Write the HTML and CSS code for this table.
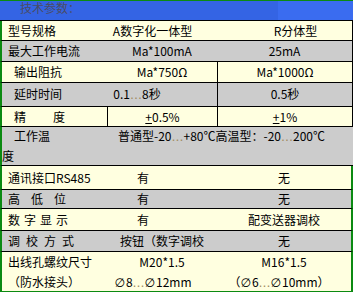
FILE: index.html
```html
<!DOCTYPE html>
<html lang="zh-CN">
<head>
<meta charset="utf-8">
<title>技术参数</title>
<link rel="stylesheet" href="styles.css">
</head>
<body>
<div class="spec">
  <div class="head"><span class="title">技术参数：</span></div>

  <div class="row cream edge h19">
    <div class="lbl">型号规格</div>
    <div class="mid shift-a">A数字化一体型</div>
    <div class="rgt shift-r">R分体型</div>
  </div>

  <div class="row gray edge h20">
    <div class="lbl">最大工作电流</div>
    <div class="mid">Ma*100mA</div>
    <div class="rgt">25mA</div>
  </div>

  <div class="row cream edge h20">
    <div class="lbl ind">输出阻抗</div>
    <div class="mid">Ma*750Ω</div>
    <div class="rgt vl">Ma*1000Ω</div>
  </div>

  <div class="row gray edge h21">
    <div class="lbl ind">延时时间</div>
    <div class="mid shift-t">0.1<span class="dots">…</span>8秒</div>
    <div class="rgt vl">0.5秒</div>
  </div>

  <div class="row cream edge h19">
    <div class="lbl ind wide">精度</div>
    <div class="mid vl"><span class="pm">+</span>0.5%</div>
    <div class="rgt vl"><span class="pm">+</span>1%</div>
  </div>

  <div class="row gray temp">
    <div class="lbl ind">工作温</div>
    <div class="span2">普通型-20<span class="dots">…</span>+80℃高温型：-20<span class="dots">…</span>200℃</div>
    <div class="wrap">度</div>
  </div>

  <div class="row cream gedge h23">
    <div class="lbl">通讯接口RS485</div>
    <div class="mid shift-y">有</div>
    <div class="rgt">无</div>
  </div>

  <div class="row gray gedge h18">
    <div class="lbl sp-hi">高低位</div>
    <div class="mid shift-y">有</div>
    <div class="rgt">无</div>
  </div>

  <div class="row cream gedge h21">
    <div class="lbl sp-ds">数字显示</div>
    <div class="mid shift-y">有</div>
    <div class="rgt">配变送器调校</div>
  </div>

  <div class="row gray gedge h20">
    <div class="lbl sp-tj">调校方式</div>
    <div class="mid">按钮（数字调校</div>
    <div class="rgt">无</div>
  </div>

  <div class="row cream gedge last">
    <div class="lbl">出线孔螺纹尺寸</div>
    <div class="mid">M20*1.5</div>
    <div class="rgt">M16*1.5</div>
    <div class="lbl">（防水接头）</div>
    <div class="mid shift-d"><span class="dia">∅</span>8<span class="dots">…</span><span class="dia">∅</span>12mm</div>
    <div class="rgt shift-e">（<span class="dia">∅</span>6<span class="dots">…</span><span class="dia">∅</span>10mm）</div>
  </div>
</div>
</body>
</html>
```

FILE: styles.css
```css
* {
  box-sizing: border-box;
  margin: 0;
  padding: 0;
}

html,
body {
  background: #ffffff;
}

body {
  width: 353px;
  height: 292px;
  overflow: hidden;
  font-family: "Noto Sans CJK SC", "DejaVu Sans", sans-serif;
  font-size: 12px;
  color: #000000;
}

.spec {
  width: 353px;
  border-bottom: 3px solid #0b8a12;
}

.head {
  height: 21px;
  border-top: 1px solid #0b8a12;
  border-bottom: 1px solid #000000;
  background: linear-gradient(to right, #3464e4 278px, #3a6cf0 278px);
  padding-left: 20px;
}

.title {
  display: block;
  line-height: 14px;
  color: #4a4c66;
}

.row {
  display: grid;
  grid-template-columns: 105px 110px 1fr;
  border-left: 2px solid #0b8a12;
  border-bottom: 1px solid #000000;
  white-space: nowrap;
}

.cream {
  background: #ffffe0;
}

.gray {
  background: #cccccc;
}

.edge {
  border-right: 1px solid #000000;
}

.gedge {
  border-right: 2px solid #0b8a12;
}

.h18 { line-height: 18px; }
.h19 { line-height: 19px; }
.h20 { line-height: 20px; }
.h21 { line-height: 21px; }
.h23 { line-height: 23px; }

.lbl {
  padding-left: 6px;
}

.ind {
  padding-left: 12px;
}

.wide {
  letter-spacing: 27px;
}

.sp-hi {
  letter-spacing: 11px;
}

.sp-ds {
  letter-spacing: 4px;
}

.sp-tj {
  letter-spacing: 6px;
}

.mid,
.rgt {
  text-align: center;
}

.vl {
  border-left: 1px solid #000000;
}

.shift-a {
  padding-right: 19px;
}

.shift-r {
  padding-left: 22px;
}

.shift-t {
  padding-right: 50px;
}

.shift-y {
  padding-right: 38px;
}

.shift-d {
  padding-right: 18px;
}

.shift-e {
  padding-right: 10px;
}

.dots {
  font-family: "DejaVu Sans", sans-serif;
  color: #a08a60;
}

.dia {
  font-family: "DejaVu Sans", sans-serif;
  padding-right: 1px;
}

.pm {
  text-decoration: underline;
}

.temp {
  grid-template-columns: 105px 1fr;
  grid-template-rows: 18px 20px;
  line-height: 18px;
}

.span2 {
  padding-left: 11px;
}

.wrap {
  grid-column: 1 / -1;
  padding-top: 3px;
  line-height: 16px;
}

.last {
  border-bottom: none;
  grid-template-rows: 20px 19px;
  line-height: 20px;
}
```
